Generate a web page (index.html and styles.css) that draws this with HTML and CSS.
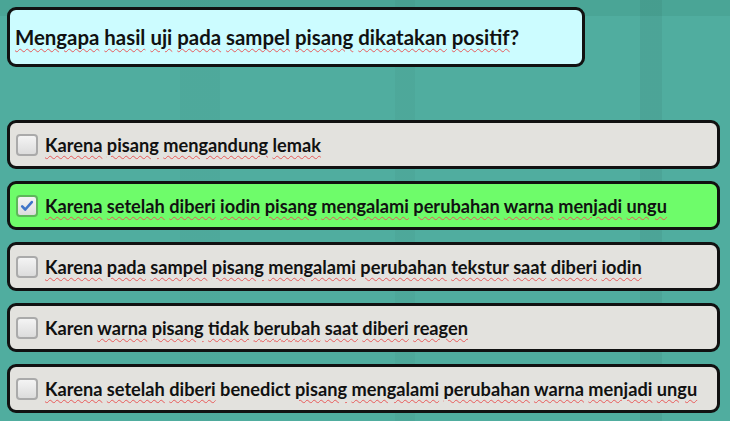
FILE: index.html
```html
<!DOCTYPE html>
<html lang="id">
<head>
    <meta charset="UTF-8">
    <meta name="viewport" content="width=device-width, initial-scale=1.0">
    <title>Kuis Uji Makanan</title>
    <link rel="stylesheet" href="styles.css">
</head>
<body>
    <div class="scene">
        <div class="question">
            <p><span class="typo">Mengapa</span> <span class="typo">hasil</span> <span class="typo">uji</span> <span class="typo">pada</span> <span class="typo">sampel</span> <span class="typo">pisang</span> <span class="typo">dikatakan</span> <span class="typo">positif</span>?</p>
        </div>

        <div class="answers">
            <label class="answer">
                <span class="box"></span>
                <span class="text"><span class="typo">Karena</span> <span class="typo">pisang</span> <span class="typo">mengandung</span> <span class="typo">lemak</span></span>
            </label>
            <label class="answer checked">
                <span class="box">
                    <svg viewBox="0 0 16 16" width="14" height="14"><path d="M2.5 8.5 L6 12 L13.5 3.5" fill="none" stroke="#3f74c8" stroke-width="3" stroke-linecap="round" stroke-linejoin="round"/></svg>
                </span>
                <span class="text"><span class="typo">Karena</span> <span class="typo">setelah</span> <span class="typo">diberi</span> <span class="typo">iodin</span> <span class="typo">pisang</span> <span class="typo">mengalami</span> <span class="typo">perubahan</span> <span class="typo">warna</span> <span class="typo">menjadi</span> <span class="typo">ungu</span></span>
            </label>
            <label class="answer">
                <span class="box"></span>
                <span class="text"><span class="typo">Karena</span> <span class="typo">pada</span> <span class="typo">sampel</span> <span class="typo">pisang</span> <span class="typo">mengalami</span> <span class="typo">perubahan</span> <span class="typo">tekstur</span> <span class="typo">saat</span> <span class="typo">diberi</span> <span class="typo">iodin</span></span>
            </label>
            <label class="answer">
                <span class="box"></span>
                <span class="text">Karen <span class="typo">warna</span> <span class="typo">pisang</span> <span class="typo">tidak</span> <span class="typo">berubah</span> <span class="typo">saat</span> <span class="typo">diberi</span> <span class="typo">reagen</span></span>
            </label>
            <label class="answer">
                <span class="box"></span>
                <span class="text"><span class="typo">Karena</span> <span class="typo">setelah</span> <span class="typo">diberi</span> benedict <span class="typo">pisang</span> <span class="typo">mengalami</span> <span class="typo">perubahan</span> <span class="typo">warna</span> <span class="typo">menjadi</span> <span class="typo">ungu</span></span>
            </label>
        </div>
    </div>
</body>
</html>
```

FILE: styles.css
```css
body {
    margin: 0;
    width: 730px;
    height: 421px;
    overflow: hidden;
    font-family: Lato, "DejaVu Sans", sans-serif;
    font-weight: 700;
    color: #111;
    background-color: #50ad9f;
    background-image:
        linear-gradient(90deg,
            transparent 0, transparent 180px,
            rgba(0, 0, 0, 0.025) 180px, rgba(0, 0, 0, 0.025) 220px,
            transparent 220px, transparent 395px,
            rgba(0, 0, 0, 0.03) 395px, rgba(0, 0, 0, 0.03) 415px,
            transparent 415px, transparent 640px,
            rgba(0, 0, 0, 0.05) 640px, rgba(0, 0, 0, 0.05) 662px,
            transparent 662px),
        linear-gradient(180deg, #4aa596 0, #4aa596 16px, #50ad9f 16px);
}
.scene {
    padding: 7px 10px 0 7px;
}
.question {
    width: 572px;
    height: 54px;
    background-color: #ccfcff;
    border: 3px solid #111;
    border-radius: 9px;
    display: flex;
    align-items: center;
}
.question p {
    margin: 0 0 0 5px;
    font-size: 20.4px;
    white-space: nowrap;
}
.answers {
    margin-top: 53px;
    display: flex;
    flex-direction: column;
    gap: 12px;
}
.answer {
    width: 701px;
    height: 43px;
    background-color: #e3e2de;
    border: 3px solid #111;
    border-radius: 9px;
    display: flex;
    align-items: center;
    gap: 7px;
    padding-left: 6px;
    cursor: pointer;
}
.answer.checked {
    background-color: #6efc6a;
}
.box {
    width: 18px;
    height: 18px;
    border: 2px solid #aaa;
    border-radius: 4px;
    background: linear-gradient(#f4f4f4, #dcdcdc);
    display: flex;
    align-items: center;
    justify-content: center;
    flex: none;
}
.checked .box {
    border-color: #5fb65b;
}
.text {
    font-size: 18.2px;
    white-space: nowrap;
}
.typo {
    text-decoration: underline wavy #e85a5a;
    text-decoration-thickness: 1px;
    text-underline-offset: 3px;
}
```
